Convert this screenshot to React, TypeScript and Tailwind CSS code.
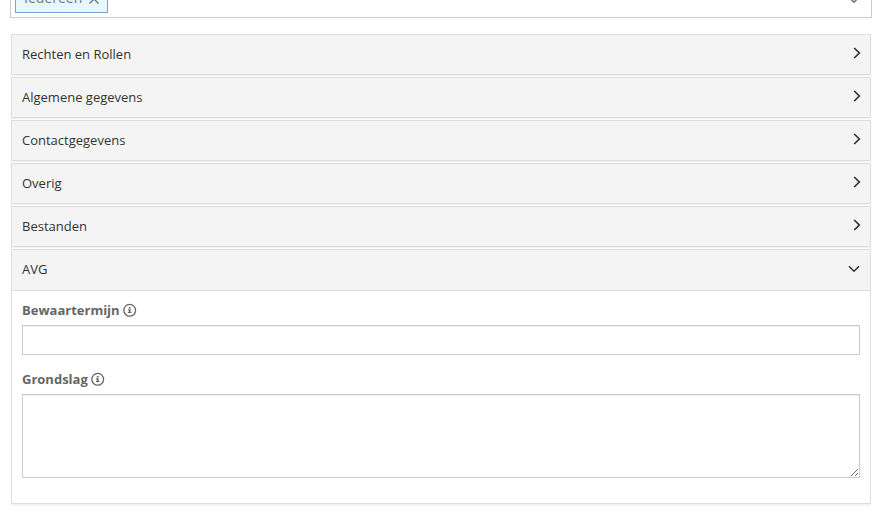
import { ReactNode } from 'react';

const closedPanels = [
  'Rechten en Rollen',
  'Algemene gegevens',
  'Contactgegevens',
  'Overig',
  'Bestanden',
];

function ChevronRight() {
  return (
    <svg width="8" height="12" viewBox="0 0 8 12" className="mr-[9px] -mt-[3px]" fill="none">
      <path d="M1.2 1L6.3 6L1.2 11" stroke="#333" strokeWidth="1.7" />
    </svg>
  );
}

function ChevronDown({ className, stroke = '#333' }: { className?: string; stroke?: string }) {
  return (
    <svg width="12" height="8" viewBox="0 0 12 8" className={className} fill="none">
      <path d="M1 1.3L6 6.2L11 1.3" stroke={stroke} strokeWidth="1.6" />
    </svg>
  );
}

function InfoIcon() {
  return (
    <svg width="14" height="14" viewBox="0 0 14 14" className="ml-[3px]" fill="none">
      <circle cx="6.7" cy="7.3" r="5.9" stroke="#666" strokeWidth="1.3" />
      <path d="M5.8 4h1.8v1.4H5.8zM5 6.2h2.6V9h.9v1H5V9h.8V7.2H5z" fill="#666" />
    </svg>
  );
}

function PanelHeader({ title, children }: { title: string; children: ReactNode }) {
  return (
    <div className="flex h-[39px] items-center justify-between bg-[#f4f4f4] pl-[10px]">
      <span className="-mt-[2px] leading-[20px]">{title}</span>
      {children}
    </div>
  );
}

function FieldLabel({ text }: { text: string }) {
  return (
    <label className="flex h-[20px] items-center font-bold text-[#666]">
      <span className="leading-[20px]">{text}</span>
      <InfoIcon />
    </label>
  );
}

export default function App() {
  return (
    <div className="h-[514px] w-[885px] overflow-hidden bg-white font-['Open_Sans',sans-serif] text-[13px] text-[#333]">
      {/* Group select, scrolled partly out of view */}
      <div className="-mt-[18px] ml-[10px] flex h-[36px] w-[862px] items-start justify-between border border-[#ccc]">
        <div className="mt-[5px] ml-[4px] flex h-[25px] w-[93px] items-center border border-[#7fa1cb] bg-[#e6f7ff] pl-[8px] text-[14px] text-[#777]">
          <span className="-mt-[5px] leading-[20px]">Iedereen</span>
          <svg width="10" height="10" viewBox="0 0 10 10" className="ml-[7px] -mt-[4px]" fill="none">
            <path d="M.5.5l9 9M9.5.5l-9 9" stroke="#777" strokeWidth="1.4" />
          </svg>
        </div>
        <ChevronDown className="mt-[13px] mr-[11px]" stroke="#777" />
      </div>

      {/* Accordion */}
      <div className="mt-[16px] ml-[11px] flex w-[860px] flex-col gap-[2px]">
        {closedPanels.map((title) => (
          <div key={title} className="border border-[#ddd] shadow-[0_1px_1px_rgba(0,0,0,0.05)]">
            <PanelHeader title={title}>
              <ChevronRight />
            </PanelHeader>
          </div>
        ))}

        <div className="border border-[#ddd] shadow-[0_2px_0_#f3f3f3]">
          <div className="bg-[#f4f4f4] pb-px">
            <PanelHeader title="AVG">
              <ChevronDown className="mr-[10px] -mt-[1px]" />
            </PanelHeader>
          </div>
          <div className="h-[213px] border-t border-[#ddd] px-[10px] pt-[9px]">
            <FieldLabel text="Bewaartermijn" />
            <input
              type="text"
              className="mt-[5px] block h-[30px] w-full border border-[#ccc] bg-white px-2 shadow-[inset_0_1px_1px_rgba(0,0,0,0.075)] outline-none"
            />
            <div className="mt-[14px]">
              <FieldLabel text="Grondslag" />
            </div>
            <textarea className="mt-[5px] block h-[84px] w-full resize border border-[#ccc] bg-white px-2 shadow-[inset_0_1px_1px_rgba(0,0,0,0.075)] outline-none" />
          </div>
        </div>
      </div>
    </div>
  );
}
